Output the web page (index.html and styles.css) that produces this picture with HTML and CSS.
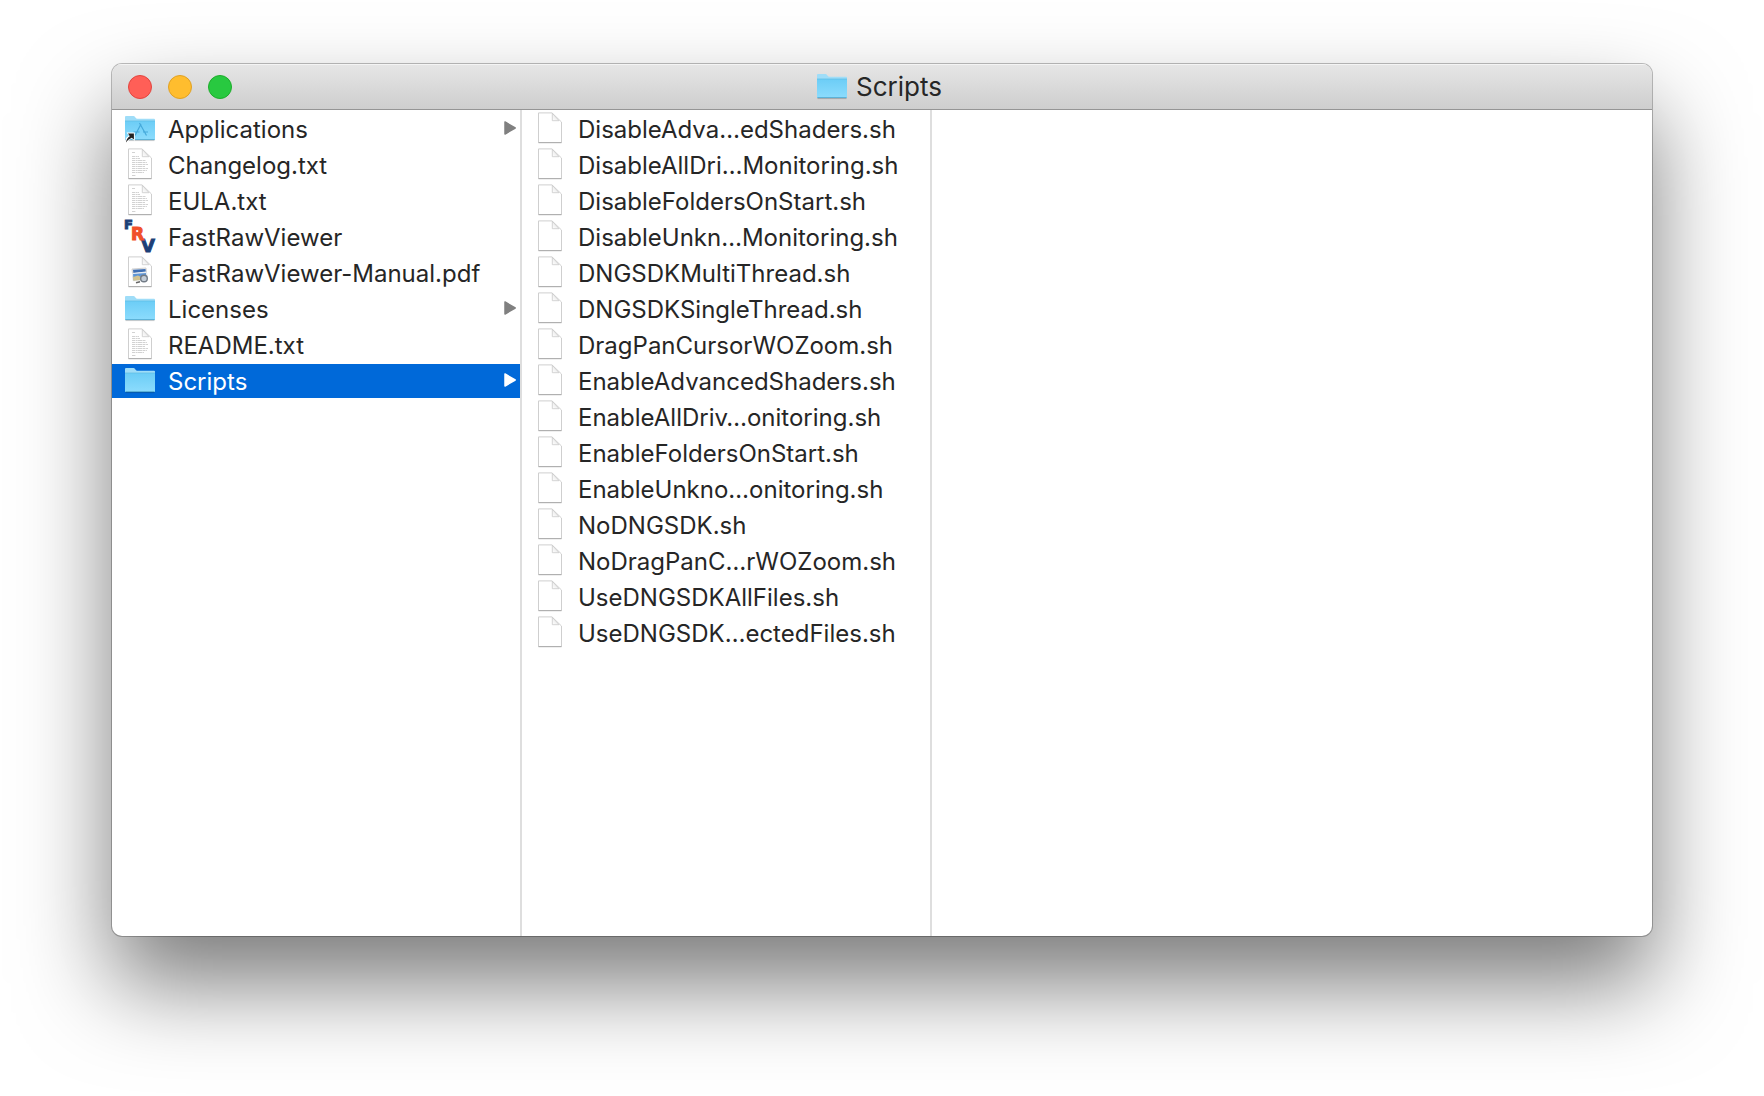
FILE: index.html
```html
<!DOCTYPE html>
<html lang="en">

<head>
    <meta charset="UTF-8">
    <meta name="viewport" content="width=device-width, initial-scale=1.0">
    <title>Scripts</title>
    <link rel="stylesheet" href="styles.css">
</head>

<body>
    <!-- Shared icons -->
    <svg class="sprite" width="0" height="0" aria-hidden="true">
        <defs>
            <linearGradient id="folderFill" x1="0" y1="0" x2="0" y2="1">
                <stop offset="0" stop-color="#6ccdf6" />
                <stop offset="1" stop-color="#8cdcfd" />
            </linearGradient>
            <linearGradient id="foldFill" x1="0" y1="1" x2="1" y2="0">
                <stop offset="0" stop-color="#fff" />
                <stop offset="1" stop-color="#ddd" />
            </linearGradient>
            <symbol id="folder" viewBox="0 0 32 34">
                <path d="M1 28V5q0-1 1-1h7.500q.8 0 1.400.8l.9 1.200q.5.700 1.400.700H30q1 0 1 1V28z" fill="#9fddf8" />
                <path d="M1 9h30v18q0 1-1 1H2q-1 0-1-1z" fill="url(#folderFill)" />
                <path d="M1 9h30" stroke="#5dbbe4" stroke-width=".7" />
                <path d="M1.400 27.600h29.200" stroke="#58aed3" stroke-width="1" />
                <path d="M1.500 28.600h29" stroke="#000" stroke-opacity=".2" stroke-width="1" />
            </symbol>
            <symbol id="doc" viewBox="0 0 32 34">
                <path d="M4.500 .9h13.500L27.500 10V30.500h-23z" fill="#fff" stroke="#cfcfcf" stroke-width="1" stroke-linejoin="round" />
                <path d="M18.300 1.200v7.500h6.700z" fill="url(#foldFill)" stroke="#cacaca" stroke-width=".8" />
                <path d="M4.500 30.700h23" stroke="#a9a9a9" stroke-width="1" />
            </symbol>
            <symbol id="textdoc" viewBox="0 0 32 34">
                <use href="#doc" width="32" height="34" />
                <g stroke="#d2d2d2" stroke-width="1" stroke-dasharray="3 .6 2 .4 4 .5">
                    <path d="M8 4.500h3M8 8.500h7M8 10.500h8M8 12.500h14M8 14.500h15M8 16.500h16M8 18.500h13M8 20.500h16M8 22.500h15M8 24.500h12M8 27.500h4" />
                </g>
            </symbol>
            <symbol id="arrow" viewBox="0 0 12 16">
                <path d="M1 1v12L11.200 7z" fill="currentColor" stroke="currentColor" stroke-width="1.500" stroke-linejoin="round" />
            </symbol>
        </defs>
    </svg>

    <main class="window">
        <header class="titlebar">
            <div class="controls">
                <button type="button" class="light close" aria-label="Close"></button>
                <button type="button" class="light minimize" aria-label="Minimize"></button>
                <button type="button" class="light zoom" aria-label="Zoom"></button>
            </div>
            <h1 class="title">
                <svg class="icon" aria-hidden="true"><use href="#folder" /></svg>
                Scripts
            </h1>
        </header>

        <div class="browser">
            <ul class="column">
                <li>
                    <a class="row" href="#">
                        <svg class="icon" viewBox="0 0 32 34" aria-hidden="true">
                            <use href="#folder" width="32" height="34" />
                            <path d="M11 23.500L17 12M15.500 11L22.500 23.500M9.500 20h6M19 20h5" fill="none" stroke="#45a9da" stroke-width="1.200" />
                            <path d="M.8 31.500L2 26l3-2.500-2.500-3H10.800V29L7.500 26.500 4.500 28.500 3 32z" fill="#fff" />
                            <path d="M2 30.500q.3-4 3.800-6.300L4 21.500h5.900v6L7.700 25.800Q4 27.500 2 30.500z" fill="#222" />
                        </svg>
                        <span class="name">Applications</span>
                        <svg class="arrow" aria-hidden="true"><use href="#arrow" /></svg>
                    </a>
                </li>
                <li>
                    <a class="row" href="#">
                        <svg class="icon" aria-hidden="true"><use href="#textdoc" /></svg>
                        <span class="name">Changelog.txt</span>
                    </a>
                </li>
                <li>
                    <a class="row" href="#">
                        <svg class="icon" aria-hidden="true"><use href="#textdoc" /></svg>
                        <span class="name">EULA.txt</span>
                    </a>
                </li>
                <li>
                    <a class="row" href="#">
                        <svg class="icon logo" viewBox="0 0 32 34" aria-hidden="true">
                            <text class="navy" x="0" y="9" font-size="13">F</text>
                            <text class="navy" x="17" y="32" font-size="18">V</text>
                            <text class="orange" x="7" y="20" font-size="17">R</text>
                        </svg>
                        <span class="name">FastRawViewer</span>
                    </a>
                </li>
                <li>
                    <a class="row" href="#">
                        <svg class="icon" viewBox="0 0 32 34" aria-hidden="true">
                            <use href="#doc" width="32" height="34" />
                            <path d="M8 13l14-1 1 9-14 1z" fill="#f4f4f4" stroke="#b5b5b5" stroke-width=".6" />
                            <path d="M9 13.700l12.500-.8.3 2.600L9.400 17z" fill="#3f6fb3" />
                            <path d="M8.500 17.500l14-1 .5 7-14 1.500z" fill="#5f96d6" stroke="#f4f4f4" stroke-width=".9" />
                            <path d="M9 21l5-1.500 4 2 4.500-1v3L9.300 24.700z" fill="#d2c391" />
                            <circle cx="20" cy="22.500" r="3.300" fill="#c3ccd6" stroke="#727b86" stroke-width="1.400" />
                            <path d="M16 25.700l-4 1" stroke="#666" stroke-width="1.400" />
                        </svg>
                        <span class="name">FastRawViewer-Manual.pdf</span>
                    </a>
                </li>
                <li>
                    <a class="row" href="#">
                        <svg class="icon" aria-hidden="true"><use href="#folder" /></svg>
                        <span class="name">Licenses</span>
                        <svg class="arrow" aria-hidden="true"><use href="#arrow" /></svg>
                    </a>
                </li>
                <li>
                    <a class="row" href="#">
                        <svg class="icon" aria-hidden="true"><use href="#textdoc" /></svg>
                        <span class="name">README.txt</span>
                    </a>
                </li>
                <li>
                    <a class="row selected" href="#" aria-current="true">
                        <svg class="icon" aria-hidden="true"><use href="#folder" /></svg>
                        <span class="name">Scripts</span>
                        <svg class="arrow" aria-hidden="true"><use href="#arrow" /></svg>
                    </a>
                </li>
            </ul>

            <ul class="column">
                <li><a class="row" href="#"><svg class="icon" aria-hidden="true"><use href="#doc" /></svg><span class="name">DisableAdva…edShaders.sh</span></a></li>
                <li><a class="row" href="#"><svg class="icon" aria-hidden="true"><use href="#doc" /></svg><span class="name">DisableAllDri…Monitoring.sh</span></a></li>
                <li><a class="row" href="#"><svg class="icon" aria-hidden="true"><use href="#doc" /></svg><span class="name">DisableFoldersOnStart.sh</span></a></li>
                <li><a class="row" href="#"><svg class="icon" aria-hidden="true"><use href="#doc" /></svg><span class="name">DisableUnkn…Monitoring.sh</span></a></li>
                <li><a class="row" href="#"><svg class="icon" aria-hidden="true"><use href="#doc" /></svg><span class="name">DNGSDKMultiThread.sh</span></a></li>
                <li><a class="row" href="#"><svg class="icon" aria-hidden="true"><use href="#doc" /></svg><span class="name">DNGSDKSingleThread.sh</span></a></li>
                <li><a class="row" href="#"><svg class="icon" aria-hidden="true"><use href="#doc" /></svg><span class="name">DragPanCursorWOZoom.sh</span></a></li>
                <li><a class="row" href="#"><svg class="icon" aria-hidden="true"><use href="#doc" /></svg><span class="name">EnableAdvancedShaders.sh</span></a></li>
                <li><a class="row" href="#"><svg class="icon" aria-hidden="true"><use href="#doc" /></svg><span class="name">EnableAllDriv…onitoring.sh</span></a></li>
                <li><a class="row" href="#"><svg class="icon" aria-hidden="true"><use href="#doc" /></svg><span class="name">EnableFoldersOnStart.sh</span></a></li>
                <li><a class="row" href="#"><svg class="icon" aria-hidden="true"><use href="#doc" /></svg><span class="name">EnableUnkno…onitoring.sh</span></a></li>
                <li><a class="row" href="#"><svg class="icon" aria-hidden="true"><use href="#doc" /></svg><span class="name">NoDNGSDK.sh</span></a></li>
                <li><a class="row" href="#"><svg class="icon" aria-hidden="true"><use href="#doc" /></svg><span class="name">NoDragPanC…rWOZoom.sh</span></a></li>
                <li><a class="row" href="#"><svg class="icon" aria-hidden="true"><use href="#doc" /></svg><span class="name">UseDNGSDKAllFiles.sh</span></a></li>
                <li><a class="row" href="#"><svg class="icon" aria-hidden="true"><use href="#doc" /></svg><span class="name">UseDNGSDK…ectedFiles.sh</span></a></li>
            </ul>
        </div>
    </main>
</body>

</html>
```
FILE: styles.css
```css
* {
    box-sizing: border-box;
}

body {
    display: flex;
    min-height: 100vh;
    margin: 0;
    padding: 64px 112px 160px;
    background: #fff;
    color: #262626;
    font-family: Inter, "Liberation Sans", sans-serif;
    font-size: 24px;
}

.sprite {
    position: absolute;
}

.window {
    display: flex;
    flex: 1;
    flex-direction: column;
    border-radius: 10px;
    background: #fff;
    box-shadow: 0 0 0 1px rgba(0, 0, 0, 0.25), 0 48px 92px rgba(0, 0, 0, 0.52);
    overflow: hidden;
}

/* Title bar */
.titlebar {
    display: grid;
    grid-template-columns: 1fr auto 1fr;
    align-items: center;
    height: 46px;
    padding: 0 22px 0 16px;
    border-bottom: 1px solid #959595;
    background: linear-gradient(#e6e6e6, #cecece);
    box-shadow: inset 0 1px #f4f4f4;
}

.controls {
    display: flex;
    gap: 16px;
}

.light {
    width: 24px;
    height: 24px;
    padding: 0;
    border: 1px solid;
    border-radius: 50%;
}

.close {
    border-color: #e2453f;
    background: #ff5f57;
}

.minimize {
    border-color: #e0a123;
    background: #ffbd2e;
}

.zoom {
    border-color: #1dad2b;
    background: #28c940;
}

.title {
    display: flex;
    align-items: center;
    gap: 8px;
    margin: 0;
    font-size: 26px;
    font-weight: 400;
    line-height: 34px;
}

/* Columns */
.browser {
    display: flex;
    flex: 1;
}

.column {
    flex: 0 0 410px;
    margin: 0;
    padding: 2px 0;
    border-right: 2px solid #dedede;
    list-style: none;
}

.row {
    display: flex;
    align-items: center;
    gap: 12px;
    height: 34px;
    margin-bottom: 2px;
    padding: 0 4px 0 12px;
    color: inherit;
    text-decoration: none;
    white-space: nowrap;
}

.name {
    flex: 1;
    padding-top: 2px;
    line-height: 34px;
}

.icon {
    flex: none;
    width: 32px;
    height: 34px;
}

.logo {
    overflow: visible;
    font-family: "DejaVu Sans", sans-serif;
    font-weight: 700;
}

.navy {
    fill: #1d3f77;
    stroke: #1d3f77;
    stroke-width: 1px;
}

.orange {
    fill: #f0512a;
    stroke: #f0512a;
    stroke-width: 1px;
}

.arrow {
    flex: none;
    width: 12px;
    height: 16px;
    color: #808080;
}

.selected {
    background: #0069d9;
    color: #fff;
}

.selected .arrow {
    color: #fff;
}
```
